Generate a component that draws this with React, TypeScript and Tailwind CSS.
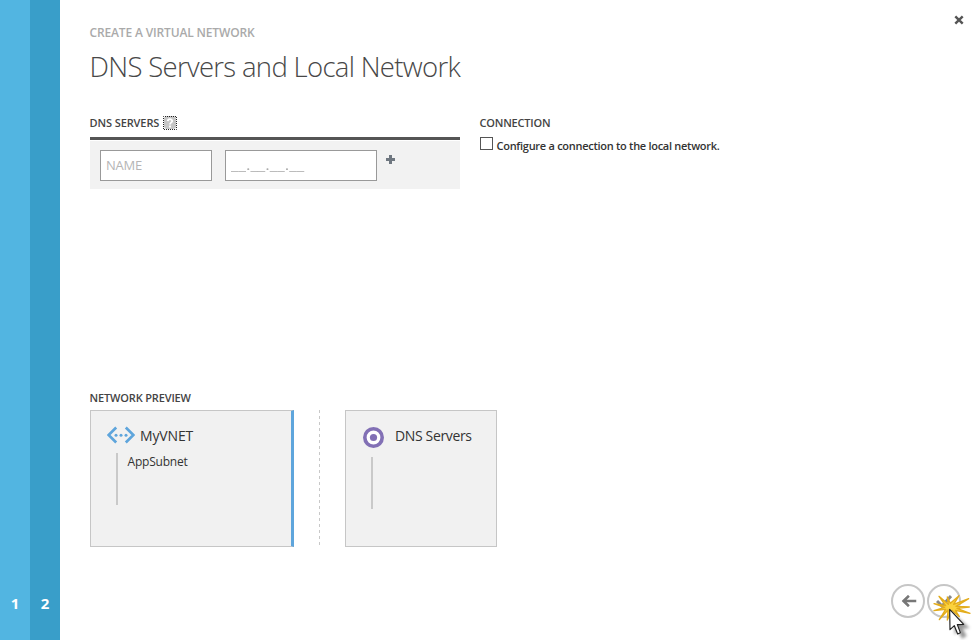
import React from "react";

const steps = [
  { n: "1", cls: "bg-[#52b5e1]" },
  { n: "2", cls: "bg-[#399ec9]" },
];

function Heading({ children, className = "" }: { children: React.ReactNode; className?: string }) {
  return (
    <h2 className={`-ml-[0.5px] h-4 whitespace-nowrap text-[11px] leading-4 font-semibold text-[#444] ${className}`}>{children}</h2>
  );
}

function HelpIcon() {
  return (
    <svg width="14" height="14" viewBox="0 0 14 14" className="mt-px shrink-0">
      <rect x="1" y="0" width="12" height="13" rx="3" fill="#c6c6c6" />
      <path d="M4.8 5.1C4.9 2.6 9.2 2.6 9.2 5C9.2 6.7 7 6.6 7 8.4M7 9.6V11.4" fill="none" stroke="#fff" strokeWidth="1.8" />
      <rect x="0.5" y="0.5" width="13" height="13" fill="none" stroke="#222" strokeDasharray="1 1" strokeDashoffset="0.5" />
    </svg>
  );
}

function VnetIcon() {
  return (
    <svg width="28" height="18" viewBox="0 0 28 18" fill="none" className="shrink-0">
      <path d="M9.2 1.5L1.6 9L9.2 16.5M18.8 1.5L26.4 9L18.8 16.5" stroke="#5ea5dc" strokeWidth="2.7" />
      <g fill="#5ea5dc">
        <circle cx="9" cy="9.3" r="1.5" />
        <circle cx="14" cy="9.3" r="1.5" />
        <circle cx="19" cy="9.3" r="1.5" />
      </g>
    </svg>
  );
}

function ClickCursor() {
  return (
    <svg className="pointer-events-none absolute left-[878px] top-[570px]" width="100" height="70" viewBox="0 0 300 210">
      <defs>
        <filter id="soft" x="-30%" y="-30%" width="160%" height="160%">
          <feGaussianBlur stdDeviation="4" />
        </filter>
      </defs>
      <path d="M230 134L275 174L254 176L266 198L252 206L240 183L230 194Z" fill="#555" opacity="0.6" filter="url(#soft)" />
      <path
        d="M183 79L211 103L208 81L217 100L243 77L227 103L272 86L234 109L274 111L237 115L276 130L232 121L244 140L222 121L208 150L210 120L184 149L203 118L168 122L200 112L168 101L203 107Z"
        fill="#fbd23c"
        stroke="#e3ac1c"
        strokeWidth="4"
        strokeLinejoin="round"
      />
      <path d="M215 118L216 179L229 167L239 192L247 188L238 164L257 163Z" fill="#fff" stroke="#222" strokeWidth="3.5" strokeLinejoin="round" />
    </svg>
  );
}

export default function App() {
  return (
    <div className="relative flex h-[640px] w-[978px] overflow-hidden bg-white font-['Open_Sans','Noto_Sans',sans-serif] text-[#333]">
      <nav className="flex w-[60px] shrink-0">
        {steps.map((s) => (
          <div key={s.n} className={`flex w-[30px] flex-col justify-end pb-[27px] text-center text-[15px] leading-5 font-bold text-white ${s.cls}`}>
            {s.n}
          </div>
        ))}
      </nav>

      <main className="flex flex-1 flex-col pl-[30px]">
        <header className="flex h-[115px] justify-between">
          <div className="-ml-[0.5px] pt-[25px]">
            <p className="h-4 whitespace-nowrap text-[12px] leading-4 font-semibold tracking-[-0.15px] text-[#aaa]">CREATE A VIRTUAL NETWORK</p>
            <h1 className="mt-[6px] h-10 whitespace-nowrap text-[27.5px] leading-10 font-light tracking-[-0.68px] text-[#484848]">
              DNS Servers and Local Network
            </h1>
          </div>
          <svg width="10" height="10" viewBox="0 0 10 10" className="mt-[15px] mr-[14px]">
            <path d="M1.3 1.3L8.7 8.7M8.7 1.3L1.3 8.7" stroke="#555" strokeWidth="2.4" />
          </svg>
        </header>

        <div className="flex h-[275px] gap-5">
          <section className="w-[370px]">
            <div className="flex h-[22px] gap-1">
              <Heading className="w-[69.5px] tracking-[-0.1px]">DNS SERVERS</Heading>
              <HelpIcon />
            </div>
            <div className="h-[3px] bg-[#555]" />
            <div className="mt-px flex h-12 bg-[#f2f2f2] pt-[9px] pl-[10px]">
              <input
                placeholder="NAME"
                className="h-[31px] w-[112px] border border-[#999] bg-white px-[5px] pb-px text-[13px] tracking-[-0.2px] placeholder:text-[#b5b5b5]"
              />
              <div className="ml-[13px] flex h-[31px] w-[152px] border border-[#999] bg-white pt-1 pl-[5px] text-[13px] leading-5 text-[#aaa]">
                <span className="inline-block origin-left scale-x-[1.31]">__.__.__.__</span>
              </div>
              <svg width="9" height="9" viewBox="0 0 9 9" className="mt-[5px] ml-[9px]">
                <path d="M3 0h3v3h3v3H6v3H3V6H0V3h3z" fill="#6f7780" />
              </svg>
            </div>
          </section>

          <section>
            <Heading className="tracking-[-0.2px]">CONNECTION</Heading>
            <label className="mt-[6px] flex h-[18px] gap-[3.5px] whitespace-nowrap text-[11px] leading-[18px] font-semibold tracking-[-0.28px]">
              <span className="h-[13px] w-[13px] border border-[#555] bg-white" />
              Configure a connection to the local network.
            </label>
          </section>
        </div>

        <section>
          <Heading className="tracking-[-0.15px]">NETWORK PREVIEW</Heading>
          <div className="mt-1 flex h-[137px]">
            <div className="w-[204px] border border-r-[3px] border-[#c6c6c6] border-r-[#5ea5dc] bg-[#f1f1f1] pt-[15px] pl-4">
              <div className="flex h-[27px] gap-[5px]">
                <VnetIcon />
                <span className="text-[14px] leading-5 tracking-[-0.15px]">MyVNET</span>
              </div>
              <div className="flex">
                <div className="ml-[9px] h-[52px] w-[2px] bg-[#c9c9c9]" />
                <span className="ml-[9.5px] text-[12px] leading-[17px] tracking-[-0.2px]">AppSubnet</span>
              </div>
            </div>
            <div className="ml-[25px] w-px bg-[repeating-linear-gradient(to_bottom,#c8c8c8_0_3px,transparent_3px_6px)]" />
            <div className="ml-[25px] w-[152px] border border-[#c6c6c6] bg-[#f1f1f1] pt-[15px] pl-[17px]">
              <div className="flex h-[31px] gap-[10px]">
                <svg width="22" height="22" viewBox="0 0 22 22" className="mt-px">
                  <circle cx="10.5" cy="10.5" r="8.7" fill="#fff" stroke="#8270b5" strokeWidth="3.6" />
                  <circle cx="10.5" cy="10.5" r="3.6" fill="#8270b5" />
                </svg>
                <span className="whitespace-nowrap text-[14px] leading-5 tracking-[-0.35px]">DNS Servers</span>
              </div>
              <div className="ml-[8px] h-[52px] w-[2px] bg-[#c9c9c9]" />
            </div>
          </div>
        </section>

        <footer className="mt-[37px] mr-[17px] flex justify-end gap-[2px]">
          <button className="flex h-[34px] w-[34px] items-center justify-center rounded-full border-2 border-[#c6c6c6]">
            <svg width="15" height="12" viewBox="0 0 15 12" fill="none" stroke="#777" strokeWidth="2.6" className="translate-x-[0.5px]">
              <path d="M15 6H2M7.4 0.8L2 6L7.4 11.2" />
            </svg>
          </button>
          <button className="flex h-[34px] w-[34px] items-center justify-center rounded-full border-2 border-[#c6c6c6]">
            <svg width="16" height="13" viewBox="0 0 16 13" fill="none" stroke="#888" strokeWidth="3">
              <path d="M1 6L6 11L15 1" />
            </svg>
          </button>
        </footer>
      </main>
      <ClickCursor />
    </div>
  );
}
